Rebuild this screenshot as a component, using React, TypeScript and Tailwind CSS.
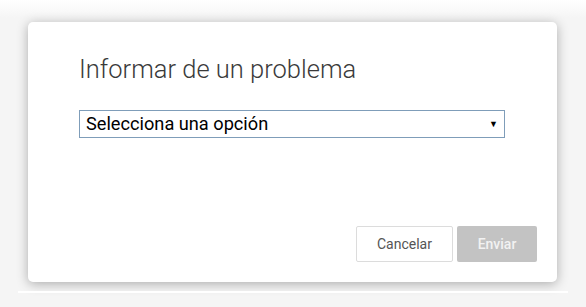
export default function App() {
  return (
    <div
      className="w-[586px] h-[307px] overflow-hidden bg-[linear-gradient(to_bottom,#ffffff_0px,#f5f5f5_18px,#f5f5f5_100%)] pt-[22px]"
      style={{ fontFamily: "Roboto, 'Liberation Sans', sans-serif" }}
    >
      <div className="ml-[28px] w-[529px] h-[260px] bg-white rounded-[5px] shadow-[0_2px_12px_rgba(0,0,0,0.3)] flex flex-col pl-[51px] pr-[20px] pb-[20px] pt-[32px]">
        <h1 className="text-[25.5px] leading-[30px] font-light text-[#3a3a3a]">
          Informar de un problema
        </h1>
        <div className="mt-[26px] w-[426px] h-[28px] border border-[#7f9db9] bg-white flex items-center justify-between pl-[6px] pr-[6px]">
          <span className="text-[18.2px] text-black leading-none">
            Selecciona una opción
          </span>
          <span className="text-[9px] text-black leading-none">▼</span>
        </div>
        <div className="mt-auto flex justify-end gap-[4px]">
          <button className="w-[97px] h-[36px] border border-[#dcdcdc] bg-white rounded-[2px] text-[14px] text-[#555] font-normal">
            Cancelar
          </button>
          <button className="w-[80px] h-[36px] bg-[#c3c3c3] rounded-[2px] text-[14px] text-[#f2f2f2] font-medium">
            Enviar
          </button>
        </div>
      </div>
      <div className="mt-[9px] mx-[18px] h-[2px] bg-white" />
    </div>
  );
}
